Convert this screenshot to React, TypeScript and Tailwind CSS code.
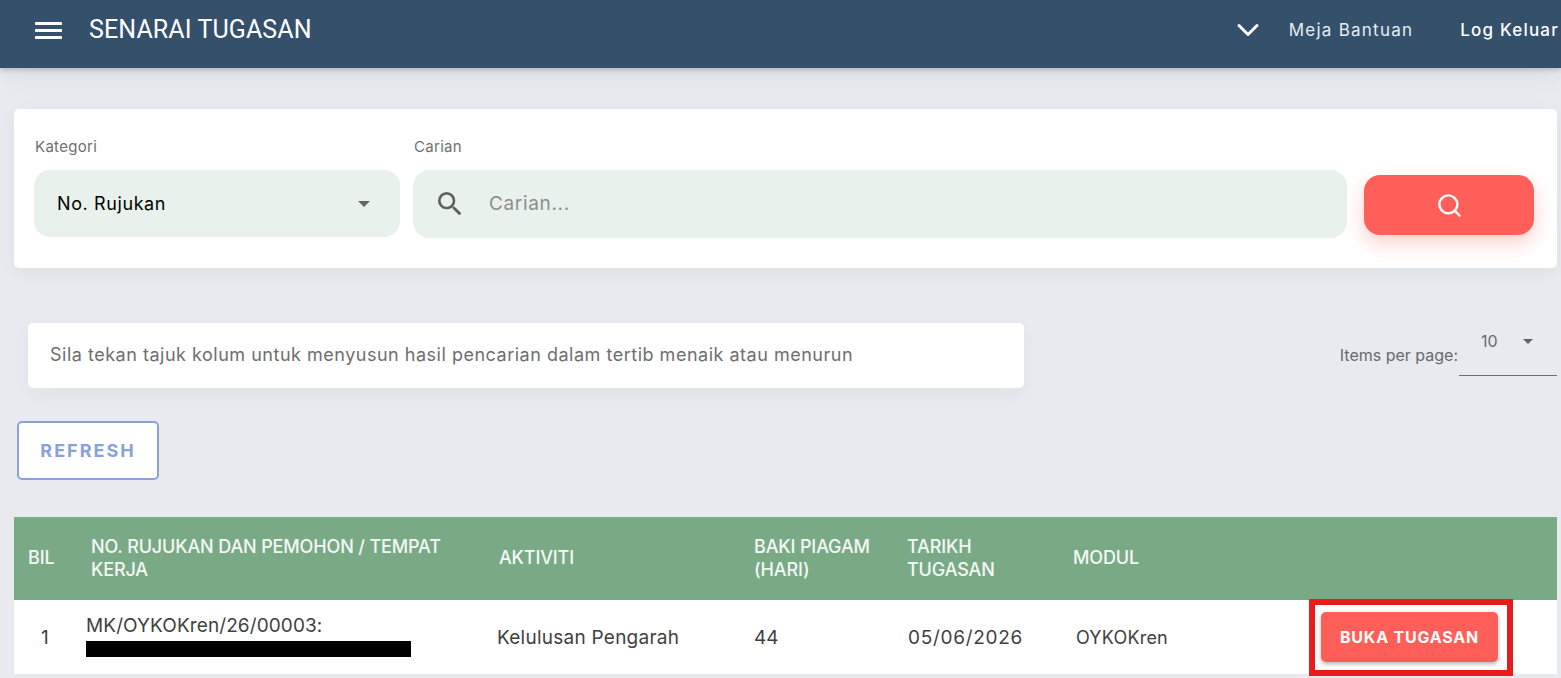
import { ChevronDown, Search } from "lucide-react";

function Caret({ className }: { className: string }) {
  return (
    <svg viewBox="0 0 10 5" className={className} fill="currentColor">
      <path d="M0 0h10L5 5z" />
    </svg>
  );
}

function Burger() {
  return (
    <svg viewBox="0 0 27 17" className="h-[17px] w-[27px]" fill="currentColor">
      <rect x="0" y="0" width="27" height="3" rx="0.7" />
      <rect x="0" y="7" width="27" height="3" rx="0.7" />
      <rect x="0" y="14" width="27" height="3" rx="0.7" />
    </svg>
  );
}

function MaterialSearch() {
  return (
    <svg viewBox="0 0 24 24" className="h-[32px] w-[32px] text-[#5f5f5f]" fill="currentColor">
      <path d="M15.5 14h-.79l-.28-.27A6.471 6.471 0 0 0 16 9.5 6.5 6.5 0 1 0 9.5 16c1.61 0 3.09-.59 4.23-1.57l.27.28v.79l5 4.99L20.49 19l-4.99-5zm-6 0C7.01 14 5 11.99 5 9.5S7.01 5 9.5 5 14 7.01 14 9.5 11.99 14 9.5 14z" />
    </svg>
  );
}

export default function App() {
  return (
    <div className="h-[678px] overflow-hidden bg-[#e8eaef] font-['Inter',sans-serif] text-[#3f3f3f]">
      <header className="flex h-[68px] items-center bg-[#34506a] pb-[8px] pl-[35px] pr-[2px] text-white shadow-[0_2px_5px_rgba(0,0,0,0.2),0_8px_30px_rgba(0,0,0,0.05)]">
        <Burger />
        <h1 className="ml-[27px] font-['Roboto',sans-serif] text-[25px] tracking-[0.1px]">SENARAI TUGASAN</h1>
        <ChevronDown className="ml-auto h-[36px] w-[36px]" strokeWidth={2} />
        <span className="ml-[23px] mt-[2px] text-[17px] tracking-[1.25px] text-[#e8edf2]">Meja Bantuan</span>
        <span className="ml-[47px] mt-[2px] text-[17px] font-medium tracking-[1.2px]">Log Keluar</span>
      </header>

      <main className="pl-[14px] pr-[4px] pt-[41px]">
        <section className="flex h-[159px] rounded-[5px] bg-white pl-[20px] pr-[23px] shadow-[0_4px_20px_rgba(0,0,0,0.05)]">
          <div className="w-[366px] pt-[29px]">
            <div className="pl-[1px] text-[15px] leading-[17px] tracking-[0.3px] text-[#6f6f6f]">Kategori</div>
            <div className="mt-[15px] flex h-[67px] items-center justify-between rounded-[16px] bg-[#e9f1ec] pl-[23px] pr-[30px] text-[18px] tracking-[0.6px] text-black">
              <span>No. Rujukan</span>
              <Caret className="h-[6px] w-[12px] text-[#666666]" />
            </div>
          </div>
          <div className="ml-[13px] flex-1 pt-[29px]">
            <div className="pl-[1px] text-[15px] leading-[17px] tracking-[0.3px] text-[#6f6f6f]">Carian</div>
            <div className="mt-[15px] flex h-[68px] items-center rounded-[16px] bg-[#e9f1ec] pl-[21px] text-[19px] tracking-[0.66px] text-[#8b8f8d]">
              <MaterialSearch />
              <span className="ml-[23px]">Carian...</span>
            </div>
          </div>
          <button className="ml-[17px] mt-[66px] flex h-[60px] w-[170px] items-center justify-center rounded-[16px] bg-[#ff5f58] text-white shadow-[0_8px_20px_rgba(255,95,88,0.3)]">
            <Search className="h-[27px] w-[27px]" strokeWidth={2.2} />
          </button>
        </section>

        <div className="mt-[55px] flex items-start justify-between">
          <div className="ml-[14px] flex h-[65px] w-[996px] items-center rounded-[5px] bg-white pb-[2px] pl-[22px] text-[18px] tracking-[0.51px] text-[#6e6e6e] shadow-[0_6px_20px_rgba(0,0,0,0.04)]">
            Sila tekan tajuk kolum untuk menyusun hasil pencarian dalam tertib menaik atau menurun
          </div>
          <div className="flex items-start">
            <span className="mt-[23px] text-[16px] leading-[18px] text-[#666b70]">Items per page:</span>
            <div className="ml-[1px] flex h-[53px] w-[98px] items-start border-b border-[#6b6f74] pl-[22px] pr-[24px] pt-[9px] text-[16px] leading-[18px] text-[#666b70]">
              <span>10</span>
              <Caret className="ml-auto mt-[7px] h-[5px] w-[10px] text-[#5f6368]" />
            </div>
          </div>
        </div>

        <button className="ml-[3px] mt-[33px] flex h-[59px] w-[142px] items-center justify-center rounded-[5px] border-2 border-[#8aa1d9] bg-white text-[18px] font-bold tracking-[2px] text-[#8aa1d9]">
          REFRESH
        </button>

        <section className="mt-[37px]">
          <div className="grid h-[83px] grid-cols-[77px_408px_255px_153px_166px_1fr] items-center bg-[#7aaa85] pb-[2px] text-[18px] font-medium leading-[23px] tracking-[-0.14px] text-[#f4f8f5]">
            <div className="pl-[14px]">BIL</div>
            <div className="pr-[40px]">NO. RUJUKAN DAN PEMOHON / TEMPAT KERJA</div>
            <div>AKTIVITI</div>
            <div className="pr-[20px]">BAKI PIAGAM (HARI)</div>
            <div className="pr-[40px]">TARIKH TUGASAN</div>
            <div>MODUL</div>
          </div>
          <div className="grid h-[74px] grid-cols-[77px_408px_255px_153px_166px_1fr] items-center bg-white text-[19px] text-[#3f3f3f]">
            <div className="pl-[27px] pt-[2px]">1</div>
            <div className="-ml-[5px] pb-[4px]">
              <div className="leading-[24px] tracking-[0.1px]">MK/OYKOKren/26/00003:</div>
              <div className="mt-[3px] h-[16px] w-[325px] bg-black" />
            </div>
            <div className="-ml-[2px] pt-[2px] tracking-[0.25px]">Kelulusan Pengarah</div>
            <div className="pt-[2px]">44</div>
            <div className="ml-[1px] pt-[2px] tracking-[0.7px]">05/06/2026</div>
            <div className="flex items-center">
              <span className="ml-[3px] text-[18px] tracking-[0.2px]">OYKOKren</span>
              <div className="-my-[2px] ml-auto mr-[44px] flex h-[77px] w-[204px] items-center border-[6px] border-[#e81c1c] pl-[6px]">
                <button className="h-[50px] w-[177px] shrink-0 rounded-[5px] bg-[#ff5f58] text-[16px] font-bold tracking-[0.8px] text-white shadow-[0_2px_4px_rgba(0,0,0,0.3)]">
                  BUKA TUGASAN
                </button>
              </div>
            </div>
          </div>
        </section>
      </main>
    </div>
  );
}
